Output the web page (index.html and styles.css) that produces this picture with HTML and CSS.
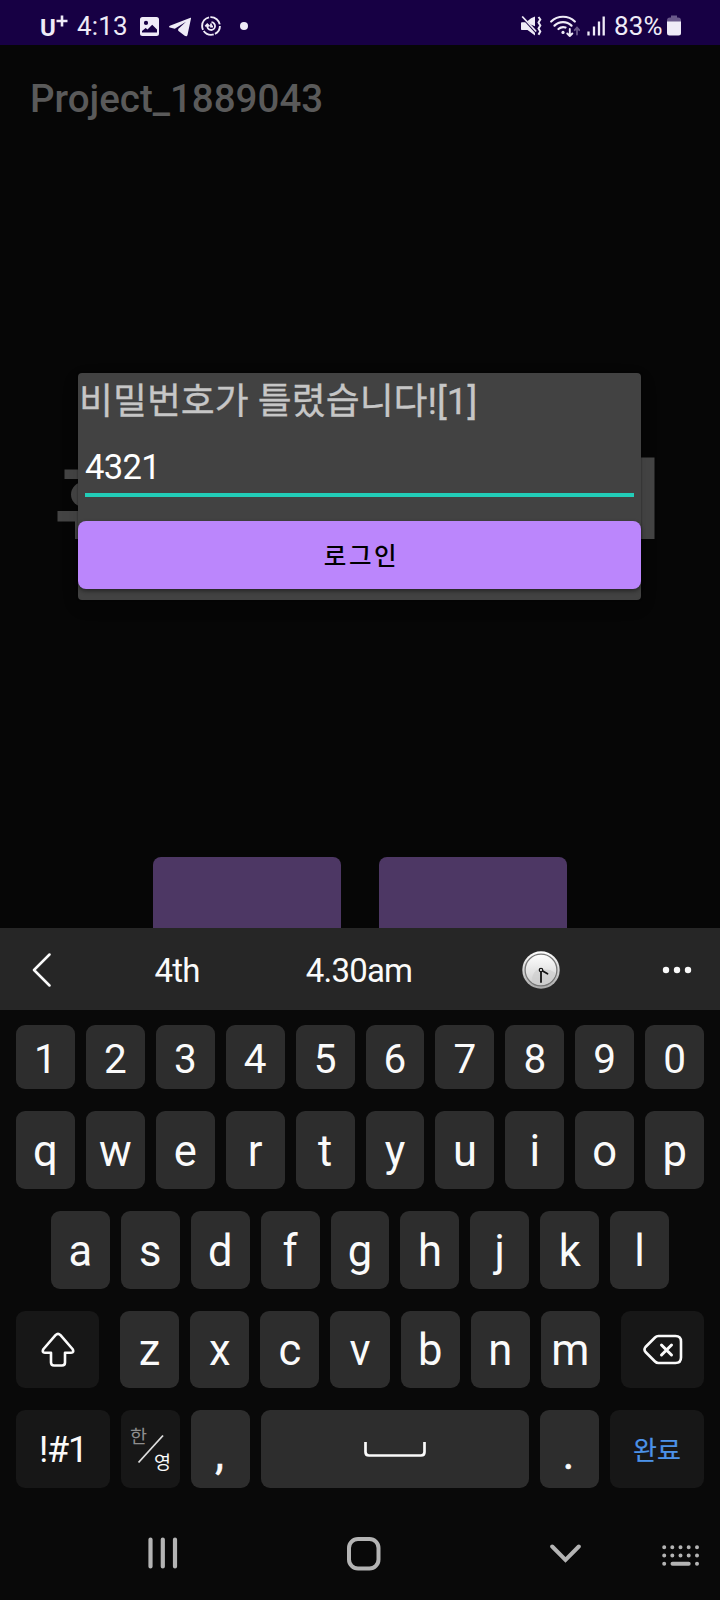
FILE: index.html
```html
<!DOCTYPE html>
<html lang="ko">
<head>
<meta charset="utf-8">
<title>Project_1889043</title>
<link rel="stylesheet" href="styles.css">
</head>
<body>
<div class="phone">
  <header class="status">
    <div class="status-left">
      <span class="carrier">U<svg class="plus" width="12" height="12" viewBox="0 0 12 12"><path d="M6 0.5v11M0.5 6h11" stroke="currentColor" stroke-width="2.6"/></svg></span>
      <span class="clock">4:13</span>
      <svg class="ic-photo" width="19" height="19" viewBox="0 0 19 19"><path fill="currentColor" fill-rule="evenodd" d="M2.500 0h14A2.500 2.500 0 0 1 19 2.500v14a2.500 2.500 0 0 1-2.500 2.500h-14A2.500 2.500 0 0 1 0 16.500v-14A2.500 2.500 0 0 1 2.500 0zM6 3.800a2.100 2.100 0 1 0 0 4.200a2.100 2.100 0 0 0 0-4.200zM2 15.500h15v-3l-4.800-4.800-4.700 4.700-1.800-1.400L2 14z"/></svg>
      <svg class="ic-plane" width="22" height="20" viewBox="0 0 22 20"><path fill="currentColor" d="M21.500 0.800L0.800 8.800c-1 .5-1 1.300 0 1.600l5 1.400L17 4.800 9.200 12v1.800l6.500 5c1.200.7 2.400.6 2.800-.8L22 1.500c.1-.6-.1-.9-.5-.7z"/></svg>
      <svg class="ic-target" width="20" height="20" viewBox="0 0 20 20" fill="none" stroke="currentColor"><circle cx="10" cy="10" r="8.900" stroke-width="1.900" stroke-dasharray="9.800 1.300 11.300 1.300 16 1.300 12.900 2"/><path d="M10.500 6.200A3.900 3.900 0 1 1 6.300 9.500M4.300 10.300l2-2 2.200 2M10 7.500v3h2" stroke-width="1.800"/></svg>
      <span class="dot"></span>
    </div>
    <div class="status-right">
      <svg width="21" height="20" viewBox="0 0 21 20"><path fill="currentColor" d="M.5 6.500h4.300L10 2.200l4-1.700v9.800L4.500 6.500zM0 7.500C0 6.800.4 6.300 1 6.300h4l9 9V19.500L6.500 14H1c-.6 0-1-.4-1-1z"/><path d="M1 1l14.500 16" stroke="#170044" stroke-width="2"/><path d="M1.200.5l14 15" stroke="currentColor" stroke-width="1.700"/><path d="M17.500 1l1.800 2.500-1.800 3 1.800 3-1.800 3 1.800 3-1.800 3.300" fill="none" stroke="currentColor" stroke-width="2"/></svg>
      <svg class="ic-wifi" width="30" height="22" viewBox="0 0 30 22" fill="none" stroke="currentColor" stroke-width="2.200" stroke-linecap="round"><path d="M1.200 6.500a17 17 0 0 1 23.600 0M4.500 10.600a12 12 0 0 1 17 0M8.500 14a7 7 0 0 1 7-1.500"/><circle cx="13" cy="17.400" r="1.600" fill="currentColor" stroke="none"/><path d="M19.800 14v7M17.300 18.500l2.500 2.600 2.500-2.600" stroke-width="1.900"/><path d="M27 19.500v-6.500M24.700 15.200l2.300-2.500 2.300 2.500" stroke-width="1.800" stroke="#69588a"/></svg>
      <svg class="ic-signal" width="18" height="20" viewBox="0 0 18 20"><path d="M1.500 15.500v4M7 10.500v9M12 5.500v14M16.700 0.500v19" stroke="currentColor" stroke-width="2.300"/></svg>
      <span class="percent">83%</span>
      <svg class="ic-battery" width="14" height="21" viewBox="0 0 14 21"><path d="M0 5.500Q0 2.500 3 2.500h1V.5h6v2h1q3 0 3 3V7H0z" fill="#69588a"/><path d="M0 6.500h14V18q0 2.500-2.500 2.500h-9Q0 20.500 0 18z" fill="currentColor"/></svg>
    </div>
  </header>

  <main class="app">
    <h1 class="app-title">Project_1889043</h1>
    <svg class="backdrop" width="600" height="84" viewBox="0 0 600 84" fill="#444"><path d="M8.500 12.500h30v9.500H8.500zM1.500 54h30v10.500H1.500zM19 64h12v18h-12z"/><circle cx="27.500" cy="37.500" r="12.500"/><path d="M585 .5h13.500V82H585z"/></svg>
    <section class="dialog">
      <p class="message">비밀번호가 틀렸습니다![1]</p>
      <div class="field">4321</div>
      <button class="login">로그인</button>
    </section>
    <div class="tiles"><span class="tile"></span><span class="tile"></span></div>
  </main>

  <section class="suggest">
    <svg class="back" width="20" height="34" viewBox="0 0 20 34"><path d="M17.500 1.500L2 17l15.500 15.500" fill="none" stroke="currentColor" stroke-width="2.500" stroke-linecap="round" stroke-linejoin="round"/></svg>
    <div class="words">
      <span>4th</span><span>4.30am</span>
      <span><svg width="38" height="38" viewBox="0 0 38 38"><defs><linearGradient id="rim" x2="0" y2="1"><stop stop-color="#fff"/><stop offset="1" stop-color="#a9a9a9"/></linearGradient><linearGradient id="face" x2="0" y2="1"><stop stop-color="#fff"/><stop offset="1" stop-color="#ccc"/></linearGradient></defs><circle cx="19" cy="19" r="18.700" fill="url(#rim)"/><circle cx="19" cy="19" r="15.900" fill="url(#face)" stroke="#777" stroke-width="1.300"/><path d="M10 31.500Q9 20 18 18l10 1 6 3q-4 12-15 12-5 0-9-2.500z" fill="#ccc" opacity=".6"/><path d="M19 19v12M19 19l6.500 3.800" stroke="#151515" stroke-width="1.800" stroke-linecap="round"/><circle cx="19" cy="19" r="1.700" fill="#fff" stroke="#151515" stroke-width="1.300"/></svg></span>
    </div>
    <svg class="more" width="30" height="8" viewBox="0 0 30 8" fill="currentColor"><circle cx="4" cy="4" r="3.200"/><circle cx="15" cy="4" r="3.200"/><circle cx="26" cy="4" r="3.200"/></svg>
  </section>

  <section class="keyboard">
    <div class="row digits"><b>1</b><b>2</b><b>3</b><b>4</b><b>5</b><b>6</b><b>7</b><b>8</b><b>9</b><b>0</b></div>
    <div class="row"><b>q</b><b>w</b><b>e</b><b>r</b><b>t</b><b>y</b><b>u</b><b>i</b><b>o</b><b>p</b></div>
    <div class="row home-row"><b>a</b><b>s</b><b>d</b><b>f</b><b>g</b><b>h</b><b>j</b><b>k</b><b>l</b></div>
    <div class="row shift-row">
      <b class="fn wide"><svg width="34" height="36" viewBox="0 0 34 36"><path d="M14.500 3.100Q17 .8 19.500 3.100L31.500 17q2 3.500-1.500 3.700h-6V30.500q0 3-3 3h-8q-3 0-3-3V20.700H4Q.5 20.500 2.500 17z" fill="none" stroke="currentColor" stroke-width="2.600" stroke-linejoin="round"/></svg></b>
      <div class="letters"><b>z</b><b>x</b><b>c</b><b>v</b><b>b</b><b>n</b><b>m</b></div>
      <b class="fn wide"><svg width="40" height="32" viewBox="0 0 40 32" fill="none" stroke="currentColor" stroke-width="2.600" stroke-linecap="round" stroke-linejoin="round"><path d="M15.500 2H32.500Q38 2 38 7.500v16q0 5.500-5.500 5.500H15.500q-2 0-3.500-1.500L2.500 18q-2-2.500 0-5L12 3.500Q13.500 2 15.500 2z"/><path d="M18.500 11l10 10M28.500 11l-10 10" stroke-width="3"/></svg></b>
    </div>
    <div class="row bottom-row">
      <b class="fn sym">!#1</b>
      <b class="fn lang"><span class="ko-a">한</span><svg class="slash" width="28" height="30" viewBox="0 0 28 30"><path d="M1.500 28.500L26 1.500" stroke="#dedede" stroke-width="1.800"/></svg><span class="ko-b">영</span></b>
      <b class="punct">,</b>
      <b class="space"><svg width="62" height="17" viewBox="0 0 62 17"><path d="M1.500 1v10q0 3.500 3.500 3.500h52q3.500 0 3.500-3.500V1" fill="none" stroke="currentColor" stroke-width="2.700"/></svg></b>
      <b class="punct">.</b>
      <b class="fn done">완료</b>
    </div>
  </section>

  <nav class="nav">
    <svg class="n-recent" width="30" height="32" viewBox="0 0 30 32"><path d="M2.500 2.500v27M14.800 2.500v27M27 2.500v27" stroke="currentColor" stroke-width="4.200" stroke-linecap="round"/></svg>
    <svg class="n-home" width="34" height="34" viewBox="0 0 34 34"><rect x="2" y="2" width="29.500" height="29.500" rx="9" fill="none" stroke="currentColor" stroke-width="4"/></svg>
    <svg class="n-down" width="32" height="20" viewBox="0 0 32 20"><path d="M2.200 2.500L15.500 15.800 28.800 2.500" fill="none" stroke="currentColor" stroke-width="4" stroke-linecap="round"/></svg>
    <svg class="n-kbd" width="38" height="22" viewBox="0 0 38 22" stroke="currentColor" stroke-width="4" stroke-linecap="round"><path d="M2.200 2.300h0M10.300 2.300h0M18.500 2.300h0M26.700 2.300h0M35 2.300h0M2.200 10.500h0M10.300 10.500h0M18.500 10.500h0M26.700 10.500h0M35 10.500h0M2.200 18.800h0M10.500 18.800H26.700M35 18.800h0"/></svg>
  </nav>
</div>
</body>
</html>
```
FILE: styles.css
```css
* { box-sizing: border-box; }
body { margin: 0; background: #060606; font-family: Roboto, "Noto Sans CJK KR", sans-serif; }
svg { display: block; flex: none; }
.phone { width: 720px; height: 1600px; display: flex; flex-direction: column; overflow: hidden; }

.status { height: 45px; flex: none; background: #170044; color: #efebf7; display: flex; justify-content: space-between; padding: 0 39px 0 40px; font-size: 26px; line-height: 30px; }
.status-left, .status-right { display: flex; align-items: flex-start; }
.carrier { display: flex; width: 37px; padding-top: 13px; font-size: 24px; font-weight: 700; }
.plus { margin-top: 2px; }
.clock { width: 63px; padding-top: 11px; letter-spacing: 0.2px; }
.ic-photo { margin-top: 17px; }
.ic-plane { margin: 17px 0 0 10px; }
.ic-target { margin: 16px 0 0 10px; }
.dot { width: 8px; height: 8px; border-radius: 50%; background: #efebf7; margin: 22px 0 0 19px; }
.status-right svg { margin-top: 16px; }
.status-right .ic-wifi { margin: 15px 0 0 8px; }
.status-right .ic-signal { margin-left: 7px; }
.percent { padding-top: 11px; margin-left: 9px; width: 53px; letter-spacing: 0.2px; }
.status-right .ic-battery { margin-top: 15px; }

.app { height: 883px; flex: none; position: relative; display: flex; flex-direction: column; align-items: center; }
.app-title { align-self: stretch; margin: 0; padding: 31px 30px 0; height: 328px; font-size: 38.500px; line-height: 46px; font-weight: 500; color: #5a5a5a; }
.backdrop { position: absolute; left: 56px; top: 412px; }
.dialog { position: relative; width: 563px; height: 227px; flex: none; margin-right: 1px; background: #424242; border-radius: 4px; box-shadow: 0 6px 18px rgba(0,0,0,.1), 0 0 2px rgba(0,0,0,.6); }
.message { margin: 0; padding: 5px 1px 0; height: 68px; font-size: 36.900px; line-height: 48px; color: #c6c6c6; white-space: nowrap; -webkit-text-stroke: 0.3px #c6c6c6; }
.field { margin: 0 7px; height: 56px; border-bottom: 4px solid #22cdb8; font-size: 34.650px; letter-spacing: -0.7px; line-height: 40px; padding-top: 6px; color: #fff; }
.login { display: block; width: 100%; height: 68px; margin-top: 24px; padding: 3px 0 0 4px; border: 0; border-radius: 8px; background: #bb86fc; color: #000; font: 500 24.500px/65px Roboto, "Noto Sans CJK KR", sans-serif; letter-spacing: 2.600px; box-shadow: 0 2px 4px rgba(0,0,0,.45); }
.tiles { display: flex; gap: 38px; margin-top: 257px; }
.tile { width: 188px; height: 71px; background: #4d3764; border-radius: 8px 8px 0 0; }

.suggest { height: 82px; flex: none; background: #262626; color: #fafafa; display: flex; align-items: center; padding: 2px 28px 0 32px; }
.words { width: 546px; margin-left: 34px; display: grid; grid-template-columns: repeat(3, 1fr); align-items: center; justify-items: center; font-size: 33px; letter-spacing: -0.8px; }
.more { margin-left: auto; }

.keyboard { background: #090909; flex: none; height: 510px; padding: 15px 16px 0; color: #fafafa; display: flex; flex-direction: column; gap: 22px; }
.row { display: flex; gap: 11px; height: 78px; }
.row b { flex: 1 1 0; min-width: 0; display: flex; align-items: center; justify-content: center; background: #2d2d2d; border-radius: 9px; font-size: 43.500px; font-weight: 400; line-height: 50px; padding: 3px 0 0; }
.row.digits { height: 64px; }
.digits b { font-size: 40.500px; padding-top: 4px; }
.home-row { padding: 0 35px; }
.shift-row { height: 77px; gap: 21px; }
.letters { flex: 1; display: flex; gap: 11px; }
.row .fn { background: #171717; }
.row .wide { flex: 0 0 83px; padding-top: 1px; }
.row .sym, .row .done { flex: 0 0 94px; }
.row .sym { font-size: 36px; letter-spacing: -1.200px; padding-top: 2px; }
.row .lang { display: block; position: relative; font-size: 18.500px; }
.ko-a, .ko-b { position: absolute; line-height: 24px; }
.ko-a { left: 9px; top: 15px; color: #8e8e8e; }
.ko-b { left: 33px; top: 41px; }
.slash { position: absolute; left: 16px; top: 24px; }
.row .lang, .row .punct { flex: 0 0 59px; }
.row .punct { padding-top: 12px; padding-right: 2px; -webkit-text-stroke: 0.6px #fafafa; }
.row .space { padding-top: 0; }
.row .done { font-size: 26px; color: #4c92e8; padding-top: 3px; -webkit-text-stroke: 0.2px #4c92e8; }

.nav { flex: 1; background: #090909; color: #b4b4b4; display: flex; align-items: flex-start; padding: 17px 0 0 148px; }
.n-recent { margin-right: 169px; }
.n-home { margin-right: 169px; }
.n-down { margin: 7px 80px 0 0; }
.n-kbd { margin-top: 8px; }
```
